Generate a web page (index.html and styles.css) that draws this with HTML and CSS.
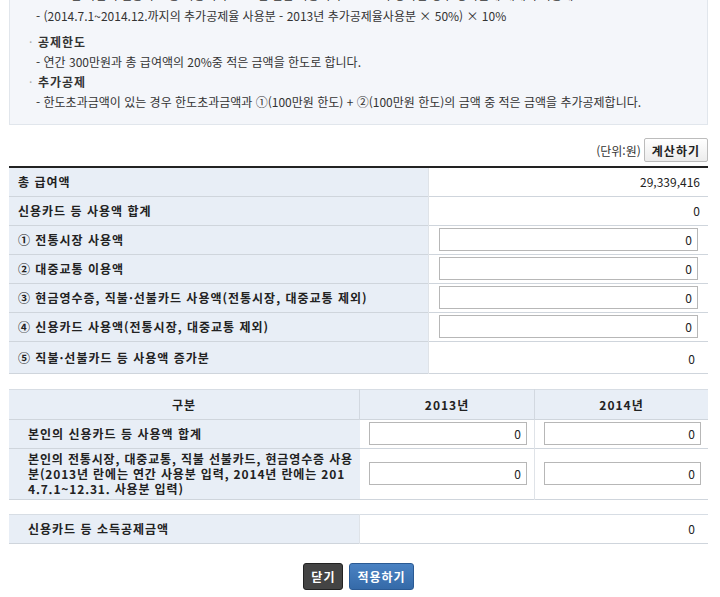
FILE: index.html
```html
<!DOCTYPE html>
<html lang="ko">
<head>
<meta charset="UTF-8">
<title>신용카드 등 소득공제 계산</title>
<link rel="stylesheet" href="styles.css">
</head>
<body>
<div class="wrap">

  <div class="guide">
    <p class="desc cut">- 2014년 하반기 신용카드 등 사용액이 2013년 연간 사용액의 50%보다 증가한 경우 증가분에 대해 추가공제</p>
    <p class="desc">- (2014.7.1~2014.12.까지의 추가공제율 사용분 - 2013년 추가공제율사용분 × 50%) × 10%</p>
    <p class="title first">공제한도</p>
    <p class="desc">- 연간 300만원과 총 급여액의 20%중 적은 금액을 한도로 합니다.</p>
    <p class="title">추가공제</p>
    <p class="desc">- 한도초과금액이 있는 경우 한도초과금액과 ①(100만원 한도) + ②(100만원 한도)의 금액 중 적은 금액을 추가공제합니다.</p>
  </div>

  <div class="toolbar">
    <span class="unit">(단위:원)</span>
    <button class="btn-calc">계산하기</button>
  </div>

  <table class="calc">
    <tr><th>총 급여액</th><td class="num">29,339,416</td></tr>
    <tr><th>신용카드 등 사용액 합계</th><td class="num">0</td></tr>
    <tr><th>① 전통시장 사용액</th><td><input class="amt" value="0"></td></tr>
    <tr><th>② 대중교통 이용액</th><td><input class="amt" value="0"></td></tr>
    <tr><th>③ 현금영수증, 직불·선불카드 사용액(전통시장, 대중교통 제외)</th><td><input class="amt" value="0"></td></tr>
    <tr><th>④ 신용카드 사용액(전통시장, 대중교통 제외)</th><td><input class="amt" value="0"></td></tr>
    <tr class="tall"><th>⑤ 직불·선불카드 등 사용액 증가분</th><td class="num inset">0</td></tr>
  </table>

  <table class="years">
    <tr class="head"><th class="c-label">구분</th><th class="c-year">2013년</th><th>2014년</th></tr>
    <tr><th>본인의 신용카드 등 사용액 합계</th><td><input class="amt" value="0"></td><td><input class="amt" value="0"></td></tr>
    <tr class="multi"><th>본인의 전통시장, 대중교통, 직불 선불카드, 현금영수증 사용분(2013년 란에는 연간 사용분 입력, 2014년 란에는 2014.7.1~12.31. 사용분 입력)</th><td><input class="amt" value="0"></td><td><input class="amt" value="0"></td></tr>
  </table>

  <table class="result">
    <tr><th class="c-label">신용카드 등 소득공제금액</th><td class="num">0</td></tr>
  </table>

  <div class="actions">
    <button class="btn-close">닫기</button>
    <button class="btn-apply">적용하기</button>
  </div>

</div>
</body>
</html>
```

FILE: styles.css
```css
body {
  margin: 0;
  background: #fff;
  color: #222;
  font-family: "Noto Sans CJK KR", "Liberation Sans", sans-serif;
  font-size: 12px;
}

.wrap {
  width: 699px;
  margin-left: 9px;
}

p {
  margin: 0;
}

/* 안내 박스 */
.guide {
  margin-top: -25px;
  padding: 10px 0 12px 19px;
  background: #f4f6fa;
  border: 1px solid #e1e6ec;
  border-top: none;
}

.guide .desc {
  line-height: 20px;
  padding-left: 7px;
  color: #333;
  white-space: nowrap;
}

.guide .desc.cut {
  margin-bottom: 1px;
}

.guide .title {
  line-height: 20px;
  font-weight: bold;
  letter-spacing: 1px;
  color: #333;
}

.guide .title.first {
  margin-top: 6px;
}

.guide .title::before {
  content: "·";
  display: inline-block;
  width: 9px;
  color: #aaa;
  font-weight: normal;
}

/* 계산 버튼 영역 */
.toolbar {
  display: flex;
  justify-content: flex-end;
  align-items: center;
  gap: 3px;
  margin-top: 13px;
  height: 24px;
}

.unit {
  color: #333;
}

.btn-calc {
  height: 24px;
  padding: 0 7px;
  font: bold 12px "Noto Sans CJK KR", sans-serif;
  letter-spacing: 1px;
  color: #222;
  background: linear-gradient(#fff, #ececec);
  border: 1px solid #bcbcbc;
  border-radius: 2px;
}

table {
  width: 100%;
  border-collapse: collapse;
}

th, td {
  padding: 0;
  font-size: 12px;
}

th {
  text-align: left;
  font-weight: bold;
  letter-spacing: 1px;
  background: #e8eef6;
  color: #222;
}

.calc {
  margin-top: 4px;
  border-top: 2px solid #222;
}

.calc tr {
  height: 29px;
  border-bottom: 1px solid #cfd5dc;
}

.calc tr.tall {
  height: 32px;
}

.calc th {
  width: 410px;
  padding-left: 9px;
  border-right: 1px solid #dfe3e8;
}

.calc td {
  padding: 0 10px;
}

.num {
  text-align: right;
}

.calc td.num {
  padding-right: 8px;
}

.calc td.num.inset {
  padding-right: 13px;
  padding-top: 2px;
}

.amt {
  box-sizing: border-box;
  width: 100%;
  height: 23px;
  padding: 0 5px;
  border: 1px solid #b7b7b7;
  text-align: right;
  font: 12px "Noto Sans CJK KR", sans-serif;
  color: #222;
}

/* 연도별 사용액 */
.years {
  margin-top: 15px;
  border-top: 1px solid #d7dde4;
}

.years tr {
  border-bottom: 1px solid #cfd5dc;
  height: 29px;
}

.years tr.head {
  height: 30px;
}

.years tr.head th {
  text-align: center;
  padding: 0;
  border-right: 1px solid #d2d8e0;
}

.years tr.head th:last-child {
  border-right: none;
}

.years th {
  padding: 0 9px 0 19px;
}

.years .c-label {
  width: 350px;
}

.years .c-year {
  width: 174px;
}

.years td {
  padding: 0 7px 0 9px;
  border-right: 1px solid #dfe3e8;
}

.years td:last-child {
  border-right: none;
}

.years tr.multi {
  height: 51px;
}

.years tr.multi th {
  line-height: 15px;
  padding: 2px 2px 2px 19px;
  letter-spacing: 0.85px;
  word-break: break-all;
}

/* 소득공제금액 */
.result {
  margin-top: 14px;
  border-top: 1px solid #d7dde4;
}

.result tr {
  height: 29px;
  border-bottom: 1px solid #cfd5dc;
}

.result th {
  width: 331px;
  padding-left: 19px;
  border-right: 1px solid #dfe3e8;
}

.result td.num {
  padding-right: 13px;
}

.actions {
  display: flex;
  justify-content: center;
  gap: 6px;
  margin-top: 19px;
}

.actions button {
  height: 27px;
  padding: 0 7px;
  font: bold 12px "Noto Sans CJK KR", sans-serif;
  letter-spacing: 1px;
  color: #fff;
  border-radius: 3px;
}

.btn-close {
  background: #444;
  border: 1px solid #222;
}

.btn-apply {
  background: linear-gradient(#4a82c3, #356aa8);
  border: 1px solid #2b5a93;
}
```
